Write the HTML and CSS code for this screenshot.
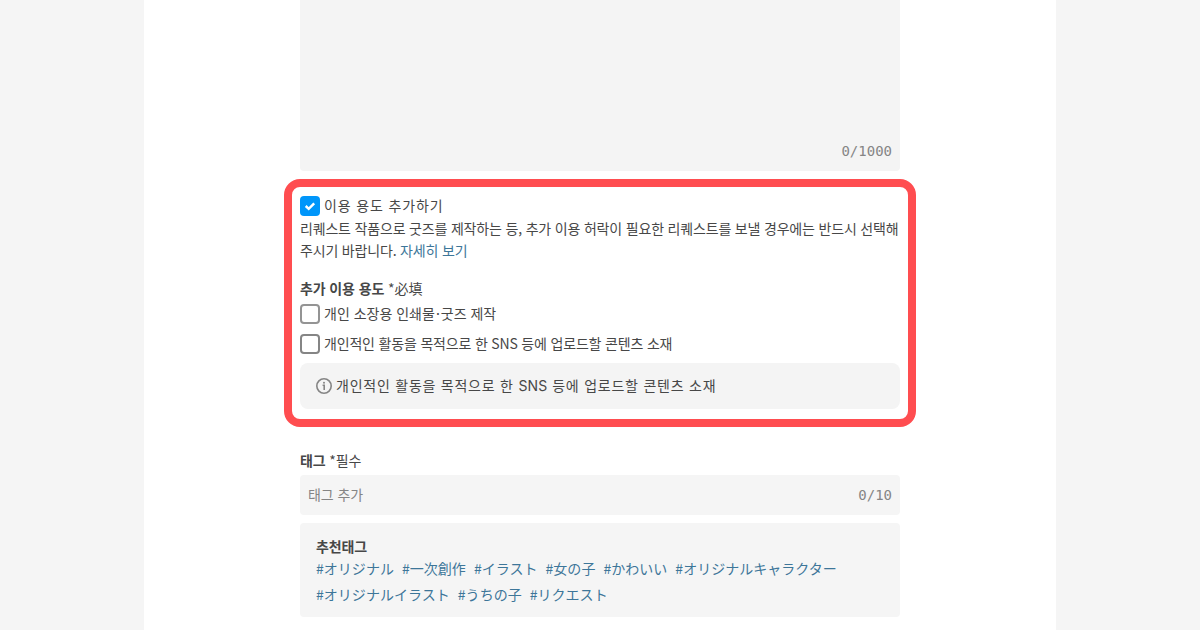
FILE: index.html
```html
<!DOCTYPE html>
<html lang="ko">
<head>
    <meta charset="UTF-8">
    <meta name="viewport" content="width=device-width, initial-scale=1.0">
    <title>리퀘스트 보내기</title>
    <link rel="stylesheet" href="styles.css">
</head>
<body>
    <main class="page">
        <div class="form">
            <div class="textarea">
                <span class="counter">0/1000</span>
            </div>

            <section class="usage">
                <div class="check-row wide">
                    <span class="checkbox checked">
                        <svg width="20" height="20" viewBox="0 0 20 20" fill="none">
                            <path d="M5.7 10L8.7 12.8L14.2 7.4" stroke="#fff" stroke-width="2.5"/>
                        </svg>
                    </span>
                    <span class="check-text">이용 용도 추가하기</span>
                </div>
                <p class="description">리퀘스트 작품으로 굿즈를 제작하는 등, 추가 이용 허락이 필요한 리퀘스트를 보낼 경우에는 반드시 선택해<br>주시기 바랍니다. <a class="link">자세히 보기</a></p>

                <h2 class="label usage-label">추가 이용 용도 <span class="required">*必填</span></h2>
                <div class="check-row option">
                    <span class="checkbox light"></span>
                    <span class="check-text">개인 소장용 인쇄물<span class="dot">·</span>굿즈 제작</span>
                </div>
                <div class="check-row option">
                    <span class="checkbox"></span>
                    <span class="check-text tight">개인적인 활동을 목적으로 한 SNS 등에 업로드할 콘텐츠 소재</span>
                </div>
                <div class="info">
                    <svg width="16" height="16" viewBox="0 0 16 16" fill="none">
                        <circle cx="8" cy="8" r="7.2" stroke="#858585" stroke-width="1.6"/>
                        <circle cx="8" cy="4.8" r="1" fill="#858585"/>
                        <path d="M6.6 7.3H8.2V12" stroke="#858585" stroke-width="1.6"/>
                    </svg>
                    <span class="check-text">개인적인 활동을 목적으로 한 <span class="latin">SNS</span> 등에 업로드할 콘텐츠 소재</span>
                </div>
            </section>

            <h2 class="label tag-label">태그 <span class="required">*필수</span></h2>
            <div class="tag-input">
                <span class="placeholder">태그 추가</span>
                <span class="counter">0/10</span>
            </div>

            <div class="suggest">
                <h3 class="label">추천태그</h3>
                <div class="tags" lang="ja">
                    <a>#オリジナル</a>
                    <a>#一次創作</a>
                    <a>#イラスト</a>
                    <a>#女の子</a>
                    <a>#かわいい</a>
                    <a>#オリジナルキャラクター</a>
                    <a>#オリジナルイラスト</a>
                    <a>#うちの子</a>
                    <a>#リクエスト</a>
                </div>
            </div>
        </div>
    </main>
</body>
</html>
```
FILE: styles.css
```css
* {
    box-sizing: border-box;
}
body {
    margin: 0;
    height: 630px;
    overflow: hidden;
    background-color: #f5f5f5;
    color: #474747;
    font-family: "Noto Sans CJK KR", sans-serif;
    font-size: 14px;
    line-height: 22px;
}
.page {
    width: 912px;
    height: 630px;
    margin: 0 auto;
    background-color: #fff;
}
.form {
    width: 632px;
    margin: 0 auto;
}
.textarea {
    display: flex;
    align-items: flex-end;
    justify-content: flex-end;
    height: 171px;
    margin: 0 16px 8px;
    padding: 8px 8px 9px;
    background-color: #f4f4f4;
    border-radius: 0 0 4px 4px;
}
.counter {
    color: #858585;
    font-family: "DejaVu Sans Mono", monospace;
    font-size: 14px;
}
.usage {
    height: 248px;
    padding: 8px;
    border: 8px solid #ff4d50;
    border-radius: 16px;
}
.check-row {
    display: flex;
    align-items: center;
    gap: 4px;
    height: 22px;
}
.check-text {
    padding-bottom: 2px;
}
.wide {
    letter-spacing: 0.85px;
}
.checkbox {
    flex: none;
    width: 20px;
    height: 20px;
    border: 2px solid #858585;
    border-radius: 4px;
}
.checkbox.light {
    border-color: #949494;
}
.checkbox.checked {
    border: none;
    background-color: #0096fa;
}
.checkbox svg {
    display: block;
}
.description {
    margin: 0;
    letter-spacing: -0.18px;
    white-space: nowrap;
}
.link {
    color: #3d7699;
}
.label {
    margin: 0;
    font-size: 14px;
    font-weight: bold;
    line-height: 22px;
    letter-spacing: -0.12px;
}
.required {
    font-weight: normal;
}
.usage-label {
    margin-top: 16px;
}
.usage-label .required {
    letter-spacing: 0;
}
.option {
    height: 30px;
}
.dot {
    margin: 0 1px;
}
.tight {
    letter-spacing: -0.18px;
}
.info {
    display: flex;
    align-items: center;
    gap: 4px;
    height: 46px;
    margin-top: 4px;
    padding: 0 16px;
    background-color: #f4f4f4;
    border-radius: 8px;
    letter-spacing: 0.76px;
}
.latin {
    font-family: Inter, sans-serif;
    letter-spacing: 0.2px;
}
.tag-label {
    margin: 22px 16px 4px;
}
.tag-input {
    display: flex;
    align-items: center;
    justify-content: space-between;
    height: 40px;
    margin: 0 16px 8px;
    padding: 0 8px;
    background-color: #f5f5f5;
    border-radius: 4px;
}
.placeholder {
    padding-bottom: 2px;
    color: #858585;
    letter-spacing: -0.1px;
}
.suggest {
    height: 94px;
    margin: 0 16px;
    padding: 12px 16px;
    background-color: #f5f5f5;
    border-radius: 4px;
}
.suggest .label {
    height: 20px;
}
.tags {
    display: flex;
    flex-wrap: wrap;
    column-gap: 8px;
    color: #3d7699;
    font-family: "Noto Sans CJK JP", sans-serif;
    line-height: 26px;
    letter-spacing: 0.03px;
}
```
